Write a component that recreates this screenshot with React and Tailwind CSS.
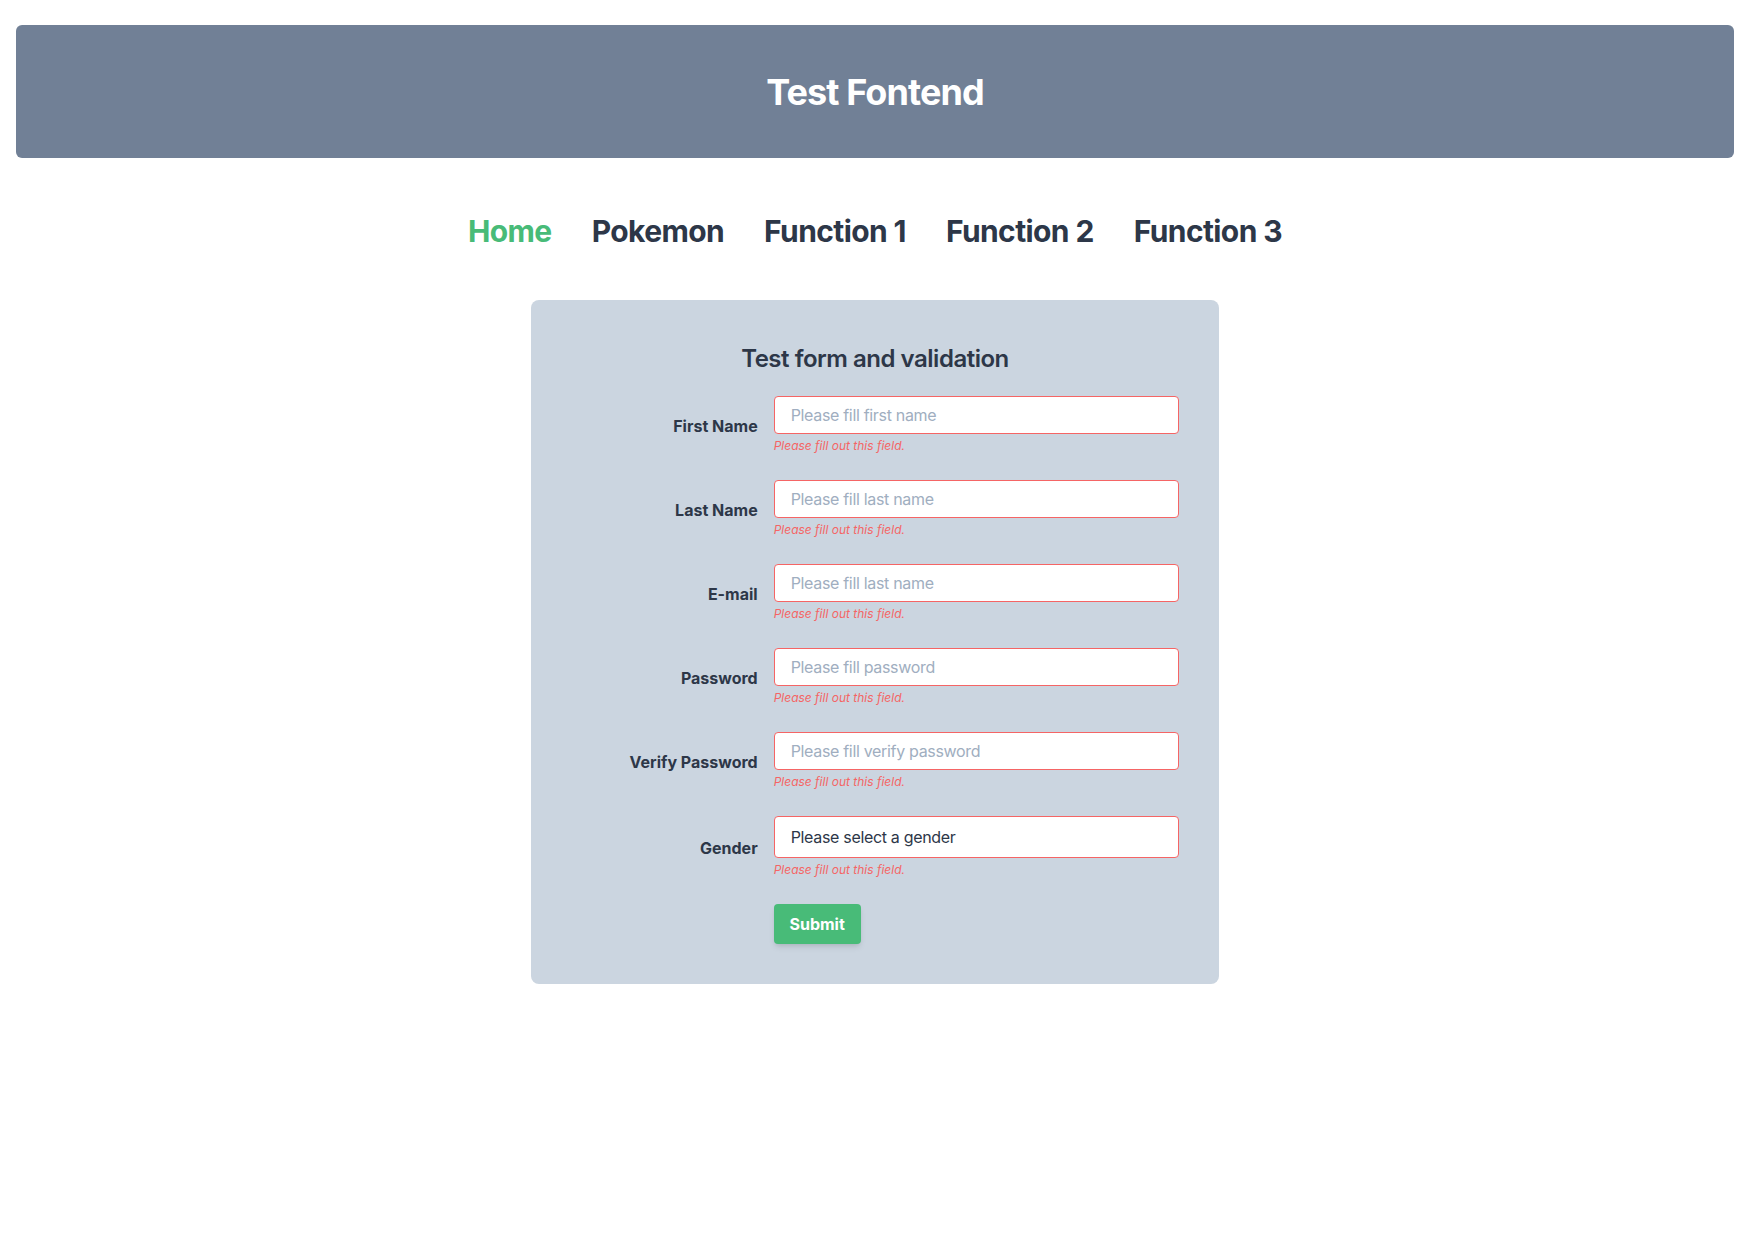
import React from "react";

const fields = [
  { label: "First Name", placeholder: "Please fill first name", type: "text" },
  { label: "Last Name", placeholder: "Please fill last name", type: "text" },
  { label: "E-mail", placeholder: "Please fill last name", type: "email" },
  { label: "Password", placeholder: "Please fill password", type: "password" },
  { label: "Verify Password", placeholder: "Please fill verify password", type: "password" },
];

const navItems = ["Home", "Pokemon", "Function 1", "Function 2", "Function 3"];

export default function App() {
  return (
    <div className="min-h-screen bg-white pl-4 pr-[21px] pt-[25px] font-['Inter','Noto_Sans',sans-serif] text-[#2d3748]">
      <header className="flex h-[133px] items-center justify-center rounded-md bg-[#718096]">
        <h1 className="text-4xl font-bold leading-10 tracking-tight text-white">Test Fontend</h1>
      </header>

      <nav className="mt-[55px] flex justify-center gap-10">
        {navItems.map((item, i) => (
          <a
            key={item}
            href="#"
            className={`text-3xl font-bold leading-9 tracking-[-0.02em] ${i === 0 ? "text-[#48bb78]" : "text-[#2d3748]"}`}
          >
            {item}
          </a>
        ))}
      </nav>

      <div className="mx-auto mt-[51px] w-[688px] rounded-lg bg-[#cbd5e0] px-10 pb-[40px] pt-[43px]">
        <h2 className="mb-[21px] text-center text-2xl font-semibold leading-8 tracking-[-0.02em] text-[#2d3748]">
          Test form and validation
        </h2>
        <form onSubmit={(e) => e.preventDefault()}>
          {fields.map((f) => (
            <div key={f.label} className="mb-[26px] flex items-center">
              <div className="w-1/3 pr-4 pt-[1px] text-right">
                <label className="text-base font-bold leading-6 text-[#2d3748]">{f.label}</label>
              </div>
              <div className="w-2/3">
                <input
                  type={f.type}
                  placeholder={f.placeholder}
                  className="block h-[38px] w-full rounded border border-[#f56565] bg-white px-4 text-base tracking-[-0.02em] text-[#4a5568] placeholder:text-[#a0aec0] focus:outline-none"
                />
                <p className="mt-1 text-xs italic leading-4 text-[#f56565]">Please fill out this field.</p>
              </div>
            </div>
          ))}
          <div className="mb-[26px] flex items-center">
            <div className="w-1/3 pr-4 pt-[1px] text-right">
              <label className="text-base font-bold leading-6 text-[#2d3748]">Gender</label>
            </div>
            <div className="w-2/3">
              <select
                defaultValue=""
                className="block h-[42px] w-full appearance-none rounded border border-[#f56565] bg-white px-4 text-base tracking-[-0.02em] text-[#2d3748] focus:outline-none"
              >
                <option value="">Please select a gender</option>
                <option value="male">Male</option>
                <option value="female">Female</option>
              </select>
              <p className="mt-1 text-xs italic leading-4 text-[#f56565]">Please fill out this field.</p>
            </div>
          </div>
          <div className="flex">
            <div className="w-1/3" />
            <div className="w-2/3">
              <button
                type="submit"
                className="h-[40px] w-[87px] rounded bg-[#48bb78] text-base font-bold text-white shadow-md"
              >
                Submit
              </button>
            </div>
          </div>
        </form>
      </div>
    </div>
  );
}
